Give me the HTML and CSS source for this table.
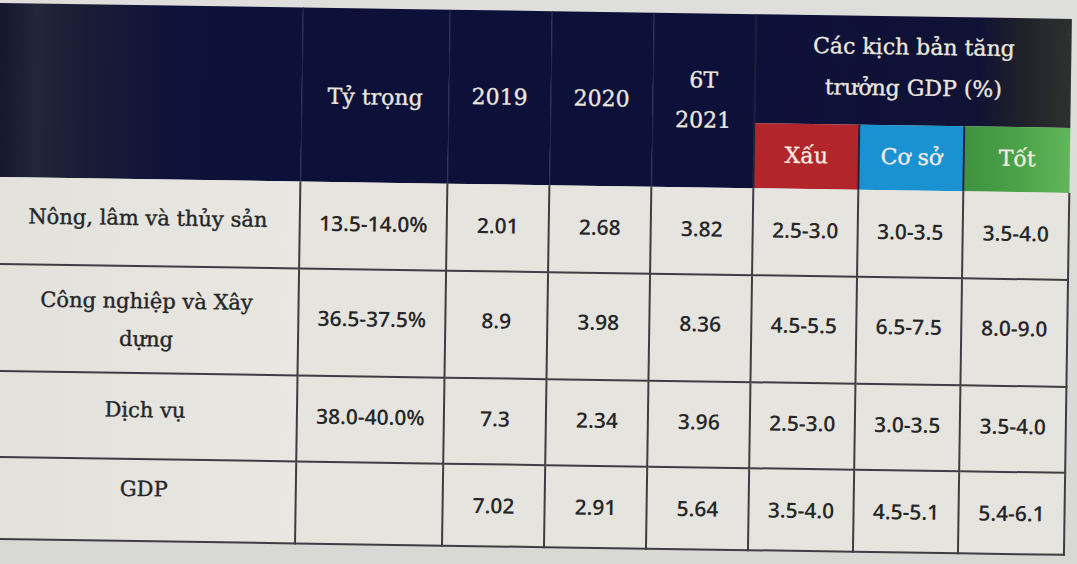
FILE: index.html
```html
<!DOCTYPE html>
<html lang="vi">
<head>
<meta charset="utf-8">
<title>Các kịch bản tăng trưởng GDP</title>
<link rel="stylesheet" href="styles.css">
</head>
<body>
<div class="stage">
  <table class="gdp">
    <colgroup>
      <col class="c-label">
      <col class="c-share">
      <col class="c-year">
      <col class="c-year">
      <col class="c-year">
      <col class="c-scen">
      <col class="c-scen">
      <col class="c-scen2">
    </colgroup>
    <thead>
      <tr class="h1">
        <th rowspan="2" class="corner"></th>
        <th rowspan="2">Tỷ trọng</th>
        <th rowspan="2">2019</th>
        <th rowspan="2">2020</th>
        <th rowspan="2" class="two">6T<br>2021</th>
        <th colspan="3" class="scen-title">Các kịch bản tăng<br>trưởng GDP (%)</th>
      </tr>
      <tr class="h2">
        <th class="bad">Xấu</th>
        <th class="base">Cơ sở</th>
        <th class="good">Tốt</th>
      </tr>
    </thead>
    <tbody>
      <tr class="r1">
        <th>Nông, lâm và thủy sản</th>
        <td>13.5-14.0%</td><td>2.01</td><td>2.68</td><td>3.82</td>
        <td>2.5-3.0</td><td>3.0-3.5</td><td>3.5-4.0</td>
      </tr>
      <tr class="r2">
        <th class="two">Công nghiệp và Xây<br>dựng</th>
        <td>36.5-37.5%</td><td>8.9</td><td>3.98</td><td>8.36</td>
        <td>4.5-5.5</td><td>6.5-7.5</td><td>8.0-9.0</td>
      </tr>
      <tr class="r3">
        <th>Dịch vụ</th>
        <td>38.0-40.0%</td><td>7.3</td><td>2.34</td><td>3.96</td>
        <td>2.5-3.0</td><td>3.0-3.5</td><td>3.5-4.0</td>
      </tr>
      <tr class="r4">
        <th class="gdp-label">GDP</th>
        <td></td><td class="low">7.02</td><td class="low">2.91</td><td class="low">5.64</td>
        <td class="low">3.5-4.0</td><td class="low">4.5-5.1</td><td class="low">5.4-6.1</td>
      </tr>
    </tbody>
  </table>
</div>
</body>
</html>
```

FILE: styles.css
```css
html, body {
  margin: 0;
  padding: 0;
  background: #d9d9d5;
  overflow: hidden;
}

.stage {
  width: 1077px;
  height: 564px;
  padding-top: 3px;
  box-sizing: border-box;
  background: linear-gradient(180deg, #dedfdc 0%, #d8d8d4 100%);
}

.gdp {
  width: 1072px;
  table-layout: fixed;
  border-collapse: collapse;
  transform: rotate(0.85deg);
  transform-origin: 0 0;
}

.c-label { width: 303px; }
.c-share { width: 147px; }
.c-year  { width: 102px; }
.c-scen  { width: 105px; }
.c-scen2 { width: 106px; }

/* ---------- header ---------- */
.gdp thead th {
  background: #0d1039;
  color: #ebe7df;
  font-family: "DejaVu Serif", "Liberation Serif", serif;
  font-size: 22px;
  font-weight: normal;
  -webkit-text-stroke: 0.35px #ebe7df;
  text-align: center;
  vertical-align: middle;
  border-left: 1px solid #24274a;
  padding: 0;
  line-height: 40px;
}

.gdp thead .h1 { height: 109px; }
.gdp thead .h2 { height: 65px; }

.gdp thead .corner {
  border-left: none;
  background: linear-gradient(90deg, #15172e 0%, #23253a 12%, #1a1c36 30%, #0e1139 60%, #0d1039 100%);
}

.gdp thead .h1 th:nth-child(2) { padding-top: 4px; }

.gdp thead .scen-title {
  vertical-align: top;
  padding-top: 10px;
  line-height: 41px;
  border-left: 2px solid #1b1d3c;
  background: linear-gradient(90deg, #0d1039 0%, #101236 70%, #1d1f2a 82%, #2f312f 100%);
}

.gdp thead .h2 th {
  color: #f3ece4;
  border-left: 2px solid #23243a;
  padding-bottom: 2px;
}

.gdp thead .bad  { background: #b1252b; }
.gdp thead .base { background: #1a92d2; }
.gdp thead .good { background: linear-gradient(90deg, #3f923f 0%, #4ea64b 60%, #62b55a 100%); color: #e8f0dc; }

/* ---------- body ---------- */
.gdp tbody th,
.gdp tbody td {
  background: #e5e4de;
  border: 2px solid #3d3d42;
  text-align: center;
  vertical-align: middle;
  color: #262628;
  padding: 0 4px;
}

.gdp tbody tr > :first-child { border-left: none; }

.gdp tbody th {
  font-family: "DejaVu Serif", "Liberation Serif", serif;
  font-size: 21px;
  font-weight: normal;
  -webkit-text-stroke: 0.4px #262628;
  line-height: 38px;
  background: linear-gradient(90deg, #e2e1db 0%, #e8e7e1 100%);
}

.gdp tbody td {
  font-family: "Open Sans", "Noto Sans", sans-serif;
  font-size: 21px;
  font-weight: 600;
}

.gdp tbody tr:first-child th,
.gdp tbody tr:first-child td { border-top: none; }

.gdp .r1 { height: 87px; }
.gdp .r2 { height: 107px; }
.gdp .r3 { height: 86px; }
.gdp .r4 { height: 82px; }

.gdp .r1 th { padding-bottom: 8px; }
.gdp .r1 td { padding-bottom: 4px; }
.gdp .r2 td { padding-bottom: 10px; }
.gdp .r3 th { padding-bottom: 12px; }
.gdp .r3 td { padding-bottom: 6px; }
.gdp .r4 .gdp-label { padding-bottom: 22px; }
.gdp .r4 td.low { padding-bottom: 0; }
```
